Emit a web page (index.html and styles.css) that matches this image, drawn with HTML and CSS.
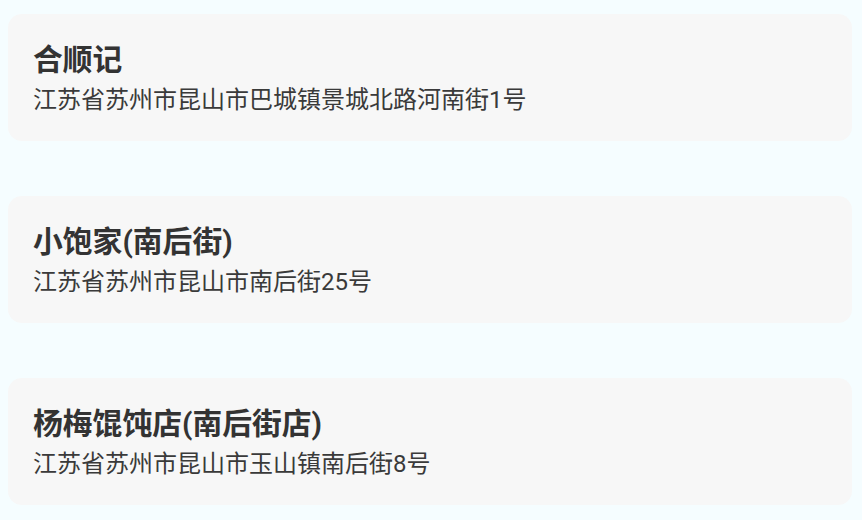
FILE: index.html
```html
<!DOCTYPE html>
<html lang="zh-CN">
<head>
    <meta charset="utf-8"/>
    <title>店铺列表</title>
    <link rel="stylesheet" href="styles.css">
</head>
<body>
    <div class="shop-list">
        <div class="shop-card">
            <div class="shop-name">合顺记</div>
            <div class="shop-addr">江苏省苏州市昆山市巴城镇景城北路河南街1号</div>
        </div>
        <div class="shop-card">
            <div class="shop-name">小饱家(南后街)</div>
            <div class="shop-addr">江苏省苏州市昆山市南后街25号</div>
        </div>
        <div class="shop-card">
            <div class="shop-name">杨梅馄饨店(南后街店)</div>
            <div class="shop-addr">江苏省苏州市昆山市玉山镇南后街8号</div>
        </div>
    </div>
</body>
</html>
```

FILE: styles.css
```css
body {
    margin: 0;
    background: #f5fdff;
    color: #333;
    font-family: Roboto, 'Noto Sans CJK SC', sans-serif;
}

.shop-list {
    display: flex;
    flex-direction: column;
    gap: 55px;
    padding: 14px 10px 0 8px;
}

.shop-card {
    height: 127px;
    box-sizing: border-box;
    padding: 29px 25px 0;
    background: #f7f7f7;
    border-radius: 14px;
}

.shop-name {
    font-size: 29.8px;
    font-weight: bold;
    line-height: 34px;
    color: #333;
}

.shop-addr {
    margin-top: 9px;
    font-size: 24px;
    line-height: 28px;
    color: #3a3a3a;
}
```
